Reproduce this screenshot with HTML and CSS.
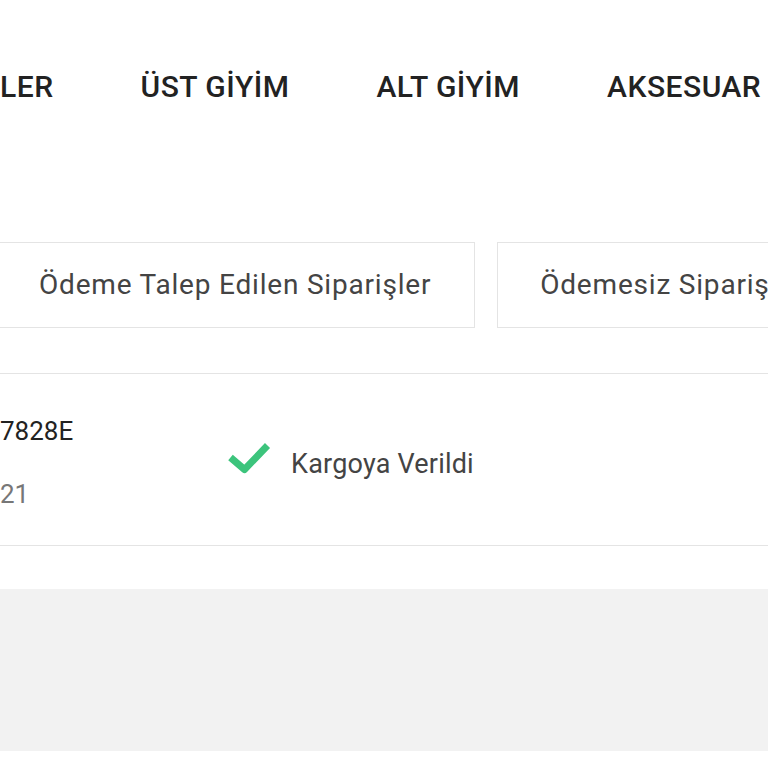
FILE: index.html
```html
<!DOCTYPE html>
<html lang="tr">
<head>
<meta charset="utf-8">
<title>Siparişlerim</title>
<link rel="stylesheet" href="styles.css">
</head>
<body>
<div class="page">
  <nav class="nav">
    <a class="nav-item">LER</a>
    <a class="nav-item">ÜST GİYİM</a>
    <a class="nav-item">ALT GİYİM</a>
    <a class="nav-item">AKSESUAR</a>
  </nav>

  <div class="tabs">
    <button class="tab">Ödeme Talep Edilen Siparişler</button>
    <button class="tab">Ödemesiz Siparişler</button>
  </div>

  <div class="order">
    <div class="order-info">
      <div class="order-no">7828E</div>
      <div class="order-date">21</div>
    </div>
    <div class="status">
      <svg class="check" width="44" height="32" viewBox="0 0 44 32" aria-hidden="true">
        <path d="M3.5 15.5 L17.5 27.5 L40.5 3.5" fill="none" stroke="#3cc47c" stroke-width="7" stroke-linejoin="round"/>
      </svg>
      <span class="status-text">Kargoya Verildi</span>
    </div>
  </div>

  <div class="panel"></div>
</div>
</body>
</html>
```

FILE: styles.css
```css
* { box-sizing: border-box; }

html, body {
  margin: 0;
  padding: 0;
  background: #ffffff;
}

body {
  font-family: Roboto, "Liberation Sans", Arial, sans-serif;
  overflow: hidden;
}

.page {
  width: 768px;
  height: 768px;
  overflow: hidden;
}

.nav {
  display: flex;
  gap: 87px;
  padding-top: 70px;
  white-space: nowrap;
}

.nav-item {
  font-size: 30px;
  line-height: 34px;
  font-weight: 500;
  color: #222222;
  letter-spacing: 0.5px;
}

.tabs {
  display: flex;
  gap: 22px;
  margin-top: 138px;
  margin-left: -4px;
  white-space: nowrap;
}

.tab {
  flex: none;
  height: 86px;
  padding: 0 43px 0 42px;
  display: flex;
  align-items: center;
  background: #ffffff;
  border: 1px solid #e4e4e4;
  border-radius: 0;
  font-family: Roboto, "Liberation Sans", Arial, sans-serif;
  font-size: 28px;
  line-height: 32px;
  letter-spacing: 0.8px;
  color: #444444;
}

.order {
  margin-top: 45px;
  height: 173px;
  border-top: 1px solid #e4e4e4;
  border-bottom: 1px solid #e4e4e4;
  display: flex;
  align-items: flex-start;
  padding-top: 41px;
}

.order-info {
  width: 227px;
  display: flex;
  flex-direction: column;
  gap: 31px;
}

.order-no {
  font-size: 26px;
  line-height: 32px;
  color: #222222;
}

.order-date {
  font-size: 26px;
  line-height: 32px;
  color: #777777;
}

.status {
  display: flex;
  align-items: flex-start;
}

.check {
  display: block;
  margin-top: 27px;
}

.status-text {
  margin-left: 20px;
  margin-top: 33px;
  font-size: 27px;
  line-height: 32px;
  letter-spacing: 0.2px;
  color: #444444;
}

.panel {
  margin-top: 43px;
  height: 162px;
  background: #f2f2f2;
}
```
